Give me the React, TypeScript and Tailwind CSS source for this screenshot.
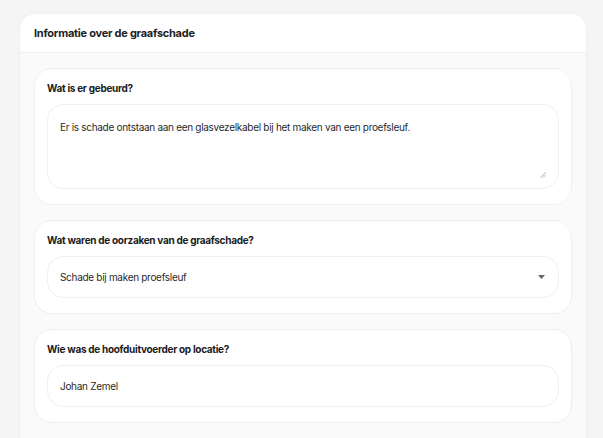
import React from "react";

const font = { fontFamily: "Inter, 'Noto Sans', sans-serif" };

const Field = ({ label, children }: { label: string; children: React.ReactNode }) => (
  <div className="bg-white border border-[#efefef] rounded-[18px] px-[12px] pt-[12px] pb-[15px]">
    <h2 className="text-[10px] leading-[14px] font-bold text-[#1b1b1b] tracking-[-0.3px] mb-[9px]">{label}</h2>
    {children}
  </div>
);

export default function App() {
  return (
    <div className="min-h-screen bg-[#f5f5f5] pt-[13px] pl-[19px]" style={font}>
      <div className="w-[568px] rounded-t-[16px] border border-[#efefef] border-b-0 overflow-hidden">
        {/* Header */}
        <div className="bg-white h-[39px] flex items-center px-[14px] border-b border-[#f0f0f0]">
          <h1 className="text-[11px] font-bold text-[#222] tracking-[-0.25px]">Informatie over de graafschade</h1>
        </div>

        {/* Body */}
        <div className="bg-[#fafafa] px-[14px] pt-[15px] pb-[16px] flex flex-col gap-[15px]">
          <Field label="Wat is er gebeurd?">
            <div className="relative">
              <textarea
                className="block w-full h-[85px] resize-none rounded-[16px] border border-[#f0f0f0] bg-white px-[12px] pt-[15px] text-[10px] leading-[14px] text-[#2a2a2a] tracking-[-0.3px] outline-none"
                style={font}
                defaultValue="Er is schade ontstaan aan een glasvezelkabel bij het maken van een proefsleuf."
              />
              {/* resize grip */}
              <svg width="6" height="6" viewBox="0 0 6 6" className="absolute right-[13px] bottom-[11px] pointer-events-none">
                <path d="M0.5 5.5L5.5 0.5M3 5.5L5.5 3" stroke="#999" strokeWidth="0.8" />
              </svg>
            </div>
          </Field>

          <Field label="Wat waren de oorzaken van de graafschade?">
            <div className="h-[42px] rounded-[16px] border border-[#f0f0f0] bg-white flex items-center justify-between px-[12px]">
              <span className="text-[10px] text-[#2a2a2a] tracking-[-0.3px]">Schade bij maken proefsleuf</span>
              <svg width="7" height="4" viewBox="0 0 7 4" className="mr-[1px]">
                <path d="M0 0h7L3.5 4z" fill="#666" />
              </svg>
            </div>
          </Field>

          <Field label="Wie was de hoofduitvoerder op locatie?">
            <div className="h-[42px] rounded-[16px] border border-[#f0f0f0] bg-white flex items-center px-[12px]">
              <span className="text-[10px] text-[#2a2a2a] tracking-[-0.3px]">Johan Zemel</span>
            </div>
          </Field>
        </div>
      </div>
    </div>
  );
}
